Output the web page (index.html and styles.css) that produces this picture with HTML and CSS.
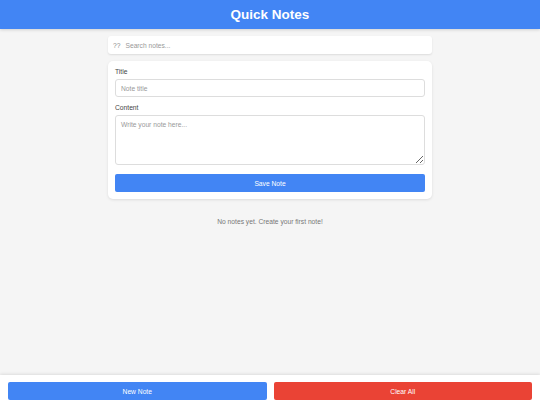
FILE: index.html
```html
<!DOCTYPE html>
<html lang="en">
<head>
    <meta charset="UTF-8">
    <meta name="viewport" content="width=device-width, initial-scale=1.0">
    <title>Quick Notes</title>
    <link rel="stylesheet" href="styles.css">
</head>
<body>
    <header class="app-header">
        <h1>Quick Notes</h1>
    </header>

    <main class="app-main">
        <div class="container">
            <div class="search-box">
                <span class="search-icon">??</span>
                <input type="text" id="search" placeholder="Search notes...">
            </div>

            <form class="note-form" id="noteForm">
                <div class="input-group">
                    <label for="noteTitle">Title</label>
                    <input type="text" id="noteTitle" placeholder="Note title">
                </div>

                <div class="input-group">
                    <label for="noteContent">Content</label>
                    <textarea id="noteContent" placeholder="Write your note here..."></textarea>
                </div>

                <button type="submit" class="btn btn-primary">Save Note</button>
            </form>

            <div class="notes-list" id="notesList">
                <p class="empty-message">No notes yet. Create your first note!</p>
            </div>
        </div>
    </main>

    <footer class="app-footer">
        <button class="btn btn-primary" id="newNote">New Note</button>
        <button class="btn btn-danger" id="clearAll">Clear All</button>
    </footer>
</body>
</html>
```

FILE: styles.css
```css
* {
    margin: 0;
    padding: 0;
    box-sizing: border-box;
    font-family: 'Liberation Sans', Arial, sans-serif;
}

body {
    display: flex;
    flex-direction: column;
    height: 100vh;
    background: #f5f5f5;
    font-size: 6.7px;
    color: #333;
}

.app-header {
    height: 29px;
    display: flex;
    justify-content: center;
    align-items: center;
    background: #4285f4;
    box-shadow: 0 1px 3px rgba(0, 0, 0, 0.15);
}

.app-header h1 {
    color: #fff;
    font-size: 13.5px;
    font-weight: bold;
}

.app-main {
    flex: 1;
    overflow: hidden;
}

.container {
    width: 324px;
    margin: 7px auto 0;
}

.search-box {
    display: flex;
    align-items: center;
    height: 18px;
    padding: 0 5px;
    background: #fff;
    border-radius: 3px;
    box-shadow: 0 1px 2px rgba(0, 0, 0, 0.1);
}

.search-icon {
    color: #888;
    margin-right: 5px;
}

.search-box input {
    flex: 1;
    border: none;
    outline: none;
    font-size: 6.7px;
    background: transparent;
}

.note-form {
    margin-top: 7px;
    padding: 7px;
    background: #fff;
    border-radius: 5px;
    box-shadow: 0 1px 3px rgba(0, 0, 0, 0.1);
}

.input-group {
    margin-bottom: 7px;
}

.input-group + .input-group {
    margin-bottom: 9px;
}

label {
    display: block;
    margin-bottom: 3px;
    color: #444;
    line-height: 8px;
}

.input-group input,
.input-group textarea {
    display: block;
    width: 100%;
    padding: 0 5px;
    border: 1px solid #ddd;
    border-radius: 3px;
    font-size: 6.7px;
    color: #333;
}

.input-group input {
    height: 18px;
}

.input-group textarea {
    height: 50px;
    padding-top: 5px;
    resize: vertical;
}

::placeholder {
    color: #999;
}

.btn {
    height: 18px;
    border: none;
    border-radius: 2px;
    color: #fff;
    font-size: 6.7px;
    cursor: pointer;
}

.note-form .btn {
    display: block;
    width: 100%;
}

.btn-primary {
    background: #4285f4;
}

.btn-danger {
    background: #ea4335;
}

.empty-message {
    margin-top: 19px;
    text-align: center;
    color: #777;
}

.app-footer {
    display: flex;
    gap: 7px;
    padding: 7px 8px 5px;
    background: #fff;
    box-shadow: 0 -1px 3px rgba(0, 0, 0, 0.1);
}

.app-footer .btn {
    flex: 1;
}
```
